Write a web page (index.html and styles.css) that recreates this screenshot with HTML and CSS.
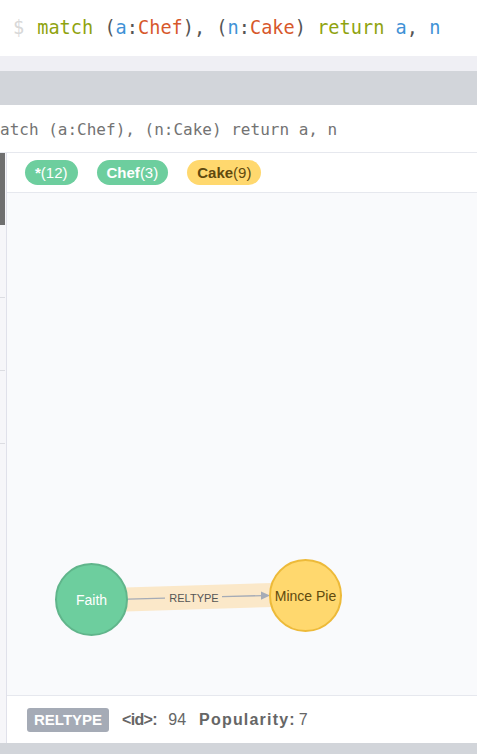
FILE: index.html
```html
<!DOCTYPE html>
<html>
<head>
<meta charset="utf-8">
<link rel="stylesheet" href="styles.css">
</head>
<body>
<div class="editor">
  <span class="prompt">$</span>
  <span class="code"><span class="kw">match</span> <span class="p">(</span><span class="var">a</span><span class="p">:</span><span class="lbl">Chef</span><span class="p">), (</span><span class="var">n</span><span class="p">:</span><span class="lbl">Cake</span><span class="p">)</span> <span class="kw">return</span> <span class="var">a</span><span class="p">,</span> <span class="var">n</span></span>
</div>
<div class="strip"></div>
<div class="gutter"></div>
<div class="card">
  <div class="query">match (a:Chef), (n:Cake) return a, n</div>
  <div class="frame">
    <div class="sidebar">
      <div class="side-active"></div>
      <div class="side-item"></div>
      <div class="side-item"></div>
      <div class="side-item"></div>
      <div class="side-rest"></div>
    </div>
    <div class="main">
      <div class="legend">
        <span class="pill green"><b>*</b>(12)</span>
        <span class="pill green"><b>Chef</b>(3)</span>
        <span class="pill yellow"><b>Cake</b>(9)</span>
      </div>
      <div class="graph">
        <svg class="canvas" width="470" height="502" viewBox="0 0 470 502">
          <line x1="118" y1="406.5" x2="266" y2="402" stroke="#fbe8c9" stroke-width="24"/>
          <line x1="121" y1="406.2" x2="158" y2="405.2" stroke="#a5abb6" stroke-width="1.3"/>
          <line x1="215" y1="403.6" x2="256" y2="402.6" stroke="#a5abb6" stroke-width="1.3"/>
          <polygon points="263,402.5 254,398.5 254,406.8" fill="#a5abb6"/>
          <text x="187" y="408.5" class="rel-text" text-anchor="middle">RELTYPE</text>
          <circle cx="84.5" cy="406.5" r="35.5" fill="#6dce9e" stroke="#60b58b" stroke-width="2"/>
          <text x="84.5" y="411.5" class="node-text white" text-anchor="middle">Faith</text>
          <circle cx="298.5" cy="402.5" r="35.5" fill="#ffd86e" stroke="#edba39" stroke-width="2"/>
          <text x="298.5" y="407.5" class="node-text brown" text-anchor="middle">Mince Pie</text>
        </svg>
      </div>
      <div class="details">
        <span class="tag">RELTYPE</span>
        <span class="prop"><b class="key-id">&lt;id&gt;:</b> 94</span>
        <span class="prop"><b class="key-pop">Popularity:</b>7</span>
      </div>
    </div>
  </div>
</div>
<div class="bottom"></div>
</body>
</html>
```

FILE: styles.css
```css
html, body {
  margin: 0;
  padding: 0;
}
body {
  width: 477px;
  height: 754px;
  overflow: hidden;
  background: #d2d5da;
  font-family: "Liberation Sans", Arial, sans-serif;
}
.editor {
  height: 56px;
  background: #ffffff;
  display: flex;
  align-items: center;
  padding-left: 13px;
  font-family: "DejaVu Sans Mono", monospace;
  font-size: 18.6px;
  white-space: pre;
  box-sizing: border-box;
  padding-bottom: 2px;
}
.prompt {
  color: #d8d8d8;
  margin-right: 13px;
}
.kw { color: #8fa30f; }
.var { color: #3f92d6; }
.lbl { color: #d7582b; }
.p { color: #555555; }
.strip {
  height: 15px;
  background: #efeff4;
}
.gutter {
  height: 34px;
  background: #d2d5da;
}
.card {
  background: #ffffff;
}
.query {
  height: 48px;
  box-sizing: border-box;
  border-bottom: 1px solid #e6e8ee;
  font-family: "DejaVu Sans Mono", monospace;
  font-size: 16px;
  color: #737373;
  white-space: pre;
  margin-left: -9.6px;
  padding-top: 15px;
}
.frame {
  display: flex;
}
.sidebar {
  width: 6px;
  border-right: 1px solid #e0e1ea;
  background: #f6f6f9;
  display: flex;
  flex-direction: column;
}
.side-active {
  height: 72px;
  background: #6f6f6f;
  width: 5px;
}
.side-item {
  height: 72px;
  border-bottom: 1px solid #dcdde2;
  width: 5px;
}
.side-rest {
  flex: 1;
}
.main {
  flex: 1;
  display: flex;
  flex-direction: column;
}
.legend {
  height: 39px;
  border-bottom: 1px solid #e6e8ee;
  display: flex;
  align-items: center;
  gap: 19px;
  padding-left: 18px;
}
.pill {
  height: 25px;
  line-height: 25px;
  border-radius: 13px;
  padding: 0 10px;
  font-size: 15px;
  color: #ffffff;
}
.pill b { font-weight: bold; }
.green { background: #6dce9e; }
.yellow { background: #ffd86e; color: #604a0e; }
.graph {
  height: 502px;
  background: #f9fafc;
  border-bottom: 1px solid #e6e8ee;
}
.canvas {
  display: block;
}
.rel-text {
  font-family: "Liberation Sans", Arial, sans-serif;
  font-size: 11px;
  fill: #555555;
}
.node-text {
  font-family: "Liberation Sans", Arial, sans-serif;
  font-size: 14px;
}
.white { fill: #ffffff; }
.brown { fill: #604a0e; }
.details {
  height: 47px;
  display: flex;
  align-items: center;
  padding-left: 20px;
  gap: 13px;
  background: #ffffff;
}
.tag {
  background: #a5abb6;
  color: #ffffff;
  font-weight: bold;
  font-size: 15px;
  height: 24px;
  line-height: 24px;
  padding: 0 7px;
  border-radius: 3px;
}
.prop {
  font-size: 16px;
  color: #666666;
}
.key-id {
  letter-spacing: -0.7px;
  margin-right: 7px;
}
.key-pop {
  letter-spacing: 1.2px;
  margin-right: 3px;
}
.bottom {
  height: 11px;
  background: #d2d5da;
}
```
